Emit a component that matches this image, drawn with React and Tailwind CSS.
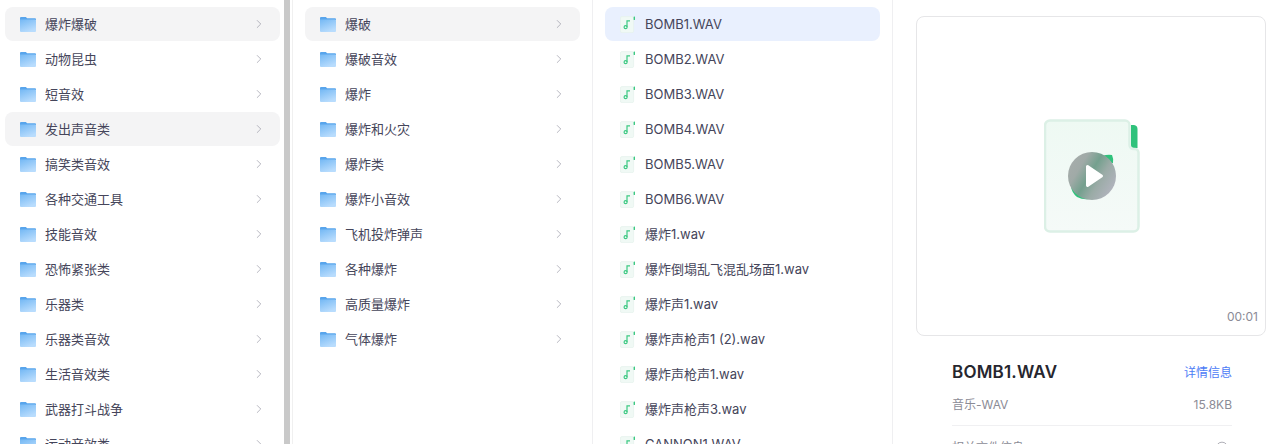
import { ChevronRight, Info } from "lucide-react";

const col1 = ["爆炸爆破", "动物昆虫", "短音效", "发出声音类", "搞笑类音效", "各种交通工具", "技能音效", "恐怖紧张类", "乐器类", "乐器类音效", "生活音效类", "武器打斗战争", "运动音效类"];
const col2 = ["爆破", "爆破音效", "爆炸", "爆炸和火灾", "爆炸类", "爆炸小音效", "飞机投炸弹声", "各种爆炸", "高质量爆炸", "气体爆炸"];
const files = ["BOMB1.WAV", "BOMB2.WAV", "BOMB3.WAV", "BOMB4.WAV", "BOMB5.WAV", "BOMB6.WAV", "爆炸1.wav", "爆炸倒塌乱飞混乱场面1.wav", "爆炸声1.wav", "爆炸声枪声1 (2).wav", "爆炸声枪声1.wav", "爆炸声枪声3.wav", "CANNON1.WAV"];

function FolderIcon() {
  return (
    <svg width="16" height="15" viewBox="0 0 16 15" className="shrink-0">
      <defs>
        <linearGradient id="folderBody" x1="0" y1="0" x2="0.5" y2="1">
          <stop offset="0" stopColor="#74b8f4" />
          <stop offset="1" stopColor="#b8dcfd" />
        </linearGradient>
      </defs>
      <path d="M1 0h4.800l1.400 1.300H15a1 1 0 0 1 1 1V3H0V1a1 1 0 0 1 1-1z" fill="#58a5ec" />
      <path d="M0 2.400h15a1 1 0 0 1 1 1V14a1 1 0 0 1-1 1H1a1 1 0 0 1-1-1z" fill="url(#folderBody)" />
    </svg>
  );
}

function MusicIcon() {
  return (
    <svg width="15" height="17" viewBox="0 0 15 17" className="shrink-0">
      <rect x="0.4" y="0.6" width="13.2" height="16" rx="1.5" fill="#f0f9f5" stroke="#e6f3ec" strokeWidth="0.8" />
      <rect x="13.6" y="0.5" width="1.4" height="3.500" rx="0.5" fill="#3cc983" />
      <path d="M7 11V4.900h3" fill="none" stroke="#3cc983" strokeWidth="1.200" />
      <circle cx="5.600" cy="11.200" r="1.500" fill="none" stroke="#3cc983" strokeWidth="1.200" />
    </svg>
  );
}

function Row({ label, active, selected, file }) {
  return (
    <div className={`flex h-[34px] mb-px shrink-0 items-center rounded-lg pl-[15px] pr-[14px] ${selected ? "bg-[#e9f0fe]" : active ? "bg-[#f4f4f5]" : ""}`}>
      {file ? <MusicIcon /> : <FolderIcon />}
      <span className={`flex-1 truncate pt-[2px] text-[13px] text-[#45455a] ${file ? "ml-[10px]" : "ml-[9px]"}`}>{label}</span>
      {!file && <ChevronRight size={14} strokeWidth={1.2} className="text-[#9a9aa6]" />}
    </div>
  );
}

function PreviewIcon() {
  return (
    <svg width="96" height="114" viewBox="0 0 96 114">
      <defs>
        <linearGradient id="paper" x1="0" y1="0" x2="0" y2="1">
          <stop offset="0" stopColor="#eef9f3" />
          <stop offset="1" stopColor="#f5faf8" />
        </linearGradient>
        <linearGradient id="disc" x1="0" y1="0.1" x2="1" y2="0.7">
          <stop offset="0" stopColor="#a8adac" />
          <stop offset="0.28" stopColor="#a0aaa7" />
          <stop offset="0.5" stopColor="#74a08e" />
          <stop offset="0.7" stopColor="#9aaba6" />
          <stop offset="1" stopColor="#b2b4be" />
        </linearGradient>
      </defs>
      <path d="M87 6h3a4 4 0 0 1 3.500 4v19h-3.500a3 3 0 0 1-3-3z" fill="#2fc27b" />
      <path d="M6 1.500h75a4.500 4.500 0 0 1 4.500 4.500v20a4 4 0 0 0 4 4h1.500a3.500 3.500 0 0 1 3.500 3.500V107.500a5 5 0 0 1-5 5H6a5 5 0 0 1-5-5V6.500a5 5 0 0 1 5-5z" fill="url(#paper)" stroke="#dcf0e6" strokeWidth="2.500" />
      <path d="M58 37q6-2 10-1 1.500 3 1 8l-12 2z" fill="#2fc27b" />
      <path d="M27 66a16 16 0 0 0 6 12q8 4 16 1l-6-14z" fill="#2fc27b" />
      <circle cx="48" cy="57" r="24" fill="url(#disc)" />
      <path d="M42 47.500a1.500 1.500 0 0 1 2.300-1.300l14 9.500a1.500 1.500 0 0 1 0 2.500l-14 9.500a1.500 1.500 0 0 1-2.300-1.200z" fill="#fff" />
    </svg>
  );
}

export default function App() {
  return (
    <div className="flex h-[444px] w-[1266px] overflow-hidden bg-white font-['Inter','Noto_Sans_CJK_SC',sans-serif]">
      <div className="flex w-[284px] shrink-0 flex-col overflow-hidden pl-[5px] pr-[4px] pt-[7px]">
        {col1.map((name, i) => (
          <Row key={name} label={name} active={i === 0 || i === 3} />
        ))}
      </div>
      <div className="w-[6px] shrink-0 bg-[#c9c9c9]" />
      <div className="w-[3px] shrink-0 border-r border-[#f0f0f0]" />
      <div className="flex w-[300px] shrink-0 flex-col overflow-hidden border-r border-[#efeff1] pl-[12px] pr-[12px] pt-[7px]">
        {col2.map((name, i) => (
          <Row key={name} label={name} active={i === 0} />
        ))}
      </div>
      <div className="flex w-[300px] shrink-0 flex-col overflow-hidden border-r border-[#efeff1] pl-[12px] pr-[12px] pt-[7px]">
        {files.map((name, i) => (
          <Row key={name} label={name} file selected={i === 0} />
        ))}
      </div>
      <div className="flex-1 overflow-hidden pl-[23px] pt-4">
        <div className="relative flex h-[320px] w-[350px] items-center justify-center rounded-lg border border-[#e6e6e8] pl-[2px]">
          <PreviewIcon />
          <span className="absolute bottom-[10px] right-[7px] text-xs text-[#8b8b96]">00:01</span>
        </div>
        <div className="ml-9 mr-[34px] mt-[24px]">
          <div className="flex items-center justify-between">
            <span className="text-[17px] font-semibold tracking-[0.2px] text-[#26262e]">BOMB1.WAV</span>
            <span className="text-xs text-[#4d7cf6]">详情信息</span>
          </div>
          <div className="mt-[11px] flex items-center justify-between border-b border-[#f0f0f2] pb-[12px] text-xs text-[#8b8b96]">
            <span>音乐-WAV</span>
            <span>15.8KB</span>
          </div>
          <div className="mt-[14px] flex items-center justify-between text-xs text-[#8b8b96]">
            <span>相关文件信息</span>
            <Info size={14} strokeWidth={1.2} className="mr-[3px]" />
          </div>
        </div>
      </div>
    </div>
  );
}
